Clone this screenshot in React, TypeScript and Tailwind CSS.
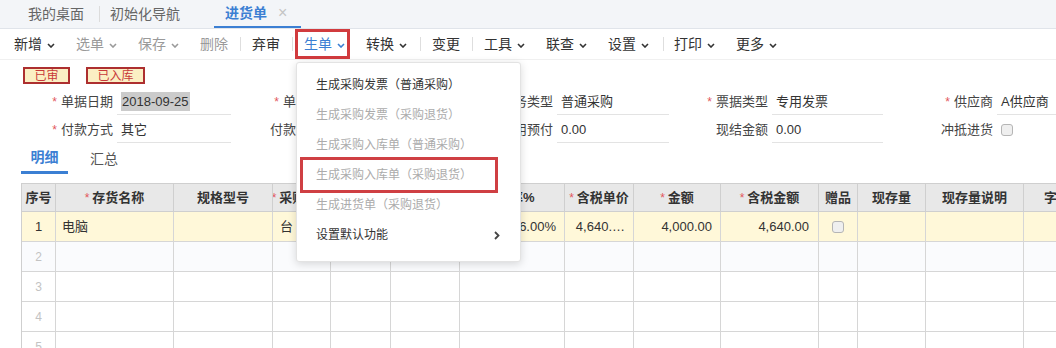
import React from 'react';

const font = '[font-family:"Liberation_Sans","Noto_Sans_CJK_SC",sans-serif]';

const Caret = () => (
  <svg width="8" height="5" viewBox="0 0 8 5" className="mt-[2px]">
    <polyline points="1,1 4,4 7,1" fill="none" stroke="currentColor" strokeWidth="1.6" />
  </svg>
);

const Sep = ({ w }: { w: string }) => (
  <div className={`${w} flex items-center`}>
    <div className="w-px h-[14px] bg-[#dedede]" />
  </div>
);

const Item = ({ label, caret, muted, w }: { label: string; caret?: boolean; muted?: boolean; w: string }) => (
  <div className={`${w} flex items-center gap-[5px] ${muted ? 'text-[#9a9a9a]' : 'text-[#333]'}`}>
    <span>{label}</span>
    {caret && <Caret />}
  </div>
);

const Star = () => <span className="text-[#e2565c] text-[12px] mr-[4px]">*</span>;

const Field = ({
  label,
  value,
  req,
  lw,
  vw,
  line = true,
  children,
}: {
  label: string;
  value?: React.ReactNode;
  req?: boolean;
  lw: string;
  vw: string;
  line?: boolean;
  children?: React.ReactNode;
}) => (
  <div className="flex items-center">
    <div className={`${lw} text-right whitespace-nowrap text-[#444]`}>
      {req && <Star />}
      {label}
    </div>
    <div className={`${vw} ml-[4px] h-[26px] flex items-center pl-[4px] whitespace-nowrap overflow-hidden ${line ? 'border-b border-[#e3e3e3]' : ''}`}>
      {value}
      {children}
    </div>
  </div>
);

const Checkbox = () => <div className="w-[12px] h-[12px] rounded-[3px] border border-[#b5b5b5] bg-[#efefef]" />;

const cols = [
  { w: 'w-[34px]', h: '序号' },
  { w: 'w-[118px]', h: '存货名称', req: true },
  { w: 'w-[99px]', h: '规格型号' },
  { w: 'w-[58px]', h: '采购单位', req: true },
  { w: 'w-[60px]', h: '数量', req: true },
  { w: 'w-[69px]', h: '单价' },
  { w: 'w-[105px]', h: '税率%', req: true },
  { w: 'w-[69px]', h: '含税单价', req: true },
  { w: 'w-[87px]', h: '金额', req: true },
  { w: 'w-[98px]', h: '含税金额', req: true },
  { w: 'w-[39px]', h: '赠品' },
  { w: 'w-[68px]', h: '现存量' },
  { w: 'w-[98px]', h: '现存量说明' },
  { w: 'w-[80px]', h: '字段一' },
];

const row1: { t: React.ReactNode; a: string }[] = [
  { t: '1', a: 'justify-center' },
  { t: '电脑', a: 'justify-start pl-[6px]' },
  { t: '', a: '' },
  { t: '台', a: 'justify-start pl-[7px]' },
  { t: '1.00', a: 'justify-end pr-[8px]' },
  { t: '4,000.00', a: 'justify-end pr-[8px]' },
  { t: '16.00%', a: 'justify-end pr-[8px]' },
  { t: '4,640.…', a: 'justify-end pr-[8px]' },
  { t: '4,000.00', a: 'justify-end pr-[8px]' },
  { t: '4,640.00', a: 'justify-end pr-[9px]' },
  { t: <Checkbox />, a: 'justify-center' },
  { t: '', a: '' },
  { t: '', a: '' },
  { t: '', a: '' },
];

const menu = [
  { t: '生成采购发票（普通采购）', on: true },
  { t: '生成采购发票（采购退货）' },
  { t: '生成采购入库单（普通采购）' },
  { t: '生成采购入库单（采购退货）' },
  { t: '生成进货单（采购退货）' },
];

export default function App() {
  return (
    <div className={`relative w-[1056px] h-[348px] overflow-hidden bg-white ${font}`}>
      {/* tab strip */}
      <div className="h-[29px] bg-[#f3f5f8] border-b border-[#e0e4ea] flex items-stretch text-[14px]">
        <div className="flex items-center pl-[28px] text-[#666]">
          <span>我的桌面</span>
          <span className="ml-[15px] mr-[10px] w-px h-[16px] bg-[#dcdcdc]" />
          <span>初始化导航</span>
        </div>
        <div className="ml-[34px] w-[87px] flex items-center pl-[11px] border-b-2 border-[#3b7fd3] text-[#3b7fd3] font-bold">
          <span>进货单</span>
          <span className="ml-[11px] text-[#c4c4c4] font-normal text-[16px]">×</span>
        </div>
      </div>

      {/* toolbar */}
      <div className="h-[31px] flex items-center pl-[14px] text-[14px] border-b border-[#f0f0f0]">
        <Item w="w-[62px]" label="新增" caret />
        <Item w="w-[62px]" label="选单" caret muted />
        <Item w="w-[62px]" label="保存" caret muted />
        <Item w="w-[40px]" label="删除" muted />
        <Sep w="w-[12px]" />
        <Item w="w-[40px]" label="弃审" />
        <Sep w="w-[3px]" />
        <div className="w-[55px] h-[30px] border-[3px] border-[#d13b3e] flex items-center gap-[5px] pl-[6px] text-[#3b7fd3]">
          <span>生单</span>
          <Caret />
        </div>
        <div className="w-[16px]" />
        <Item w="w-[54px]" label="转换" caret />
        <Sep w="w-[12px]" />
        <Item w="w-[40px]" label="变更" />
        <Sep w="w-[12px]" />
        <Item w="w-[62px]" label="工具" caret />
        <Item w="w-[62px]" label="联查" caret />
        <Item w="w-[55px]" label="设置" caret />
        <Sep w="w-[11px]" />
        <Item w="w-[62px]" label="打印" caret />
        <Item w="w-[62px]" label="更多" caret />
      </div>

      {/* status badges */}
      <div className="mt-[7px] flex gap-[16px] pl-[23px] text-[12px]">
        <div className="w-[47px] h-[17px] border-2 border-[#ad2f2f] bg-[#fbefc3] text-[#c8393a] flex items-center justify-center">已审</div>
        <div className="w-[59px] h-[17px] border-2 border-[#ad2f2f] bg-[#fbefc3] text-[#c8393a] flex items-center justify-center">已入库</div>
      </div>

      {/* header form */}
      <div className="mt-[4px] text-[13px] text-[#333]">
        <div className="h-[28px] flex items-center">
          <Field lw="w-[113px]" vw="w-[114px]" req label="单据日期" value={<span className="bg-[#cbcbcb] px-[1px]">2018-09-25</span>} />
          <Field lw="w-[104px]" vw="w-[113px]" req label="单据编号" value="JHD-2018-0925" />
          <Field lw="w-[101px]" vw="w-[112px]" req label="业务类型" value="普通采购" />
          <Field lw="w-[99px]" vw="w-[111px]" req label="票据类型" value="专用发票" />
          <Field lw="w-[110px]" vw="w-[80px]" req label="供应商" value="A供应商" />
        </div>
        <div className="h-[28px] flex items-center">
          <Field lw="w-[113px]" vw="w-[114px]" req label="付款方式" value="其它" />
          <Field lw="w-[104px]" vw="w-[113px]" label="付款截止日" value="" />
          <Field lw="w-[101px]" vw="w-[112px]" label="使用预付" value="0.00" />
          <Field lw="w-[99px]" vw="w-[111px]" label="现结金额" value="0.00" />
          <Field lw="w-[110px]" vw="w-[60px]" line={false} label="冲抵进货">
            <Checkbox />
          </Field>
        </div>
      </div>

      {/* detail tabs */}
      <div className="h-[30px] flex items-stretch text-[14px]">
        <div className="ml-[21px] w-[47px] border-b-[3px] border-[#3b7fd3] flex items-center justify-center text-[#3b7fd3] font-bold">明细</div>
        <div className="pl-[22px] flex items-center text-[#555]">汇总</div>
      </div>

      {/* grid */}
      <div className="mt-[9px] ml-[21px] w-[1120px] text-[13px] text-[#333]">
        <div className="flex h-[29px] bg-[#e8e8e8] border-t border-l border-[#cfcfcf]">
          {cols.map((c, i) => (
            <div key={i} className={`${c.w} shrink-0 flex items-center justify-center whitespace-nowrap overflow-hidden border-r border-b border-[#cfcfcf] font-bold`}>
              {c.req && <span className="text-[#e2565c] font-normal text-[12px] mr-[3px]">*</span>}
              {c.h}
            </div>
          ))}
        </div>
        <div className="flex h-[30px] bg-[#fff8d9] border-l border-[#cfcfcf]">
          {row1.map((c, i) => (
            <div key={i} className={`${cols[i].w} shrink-0 flex items-center whitespace-nowrap overflow-hidden border-r border-b border-[#d6d6d6] ${c.a}`}>
              {c.t}
            </div>
          ))}
        </div>
        {[2, 3, 4, 5].map((n) => (
          <div key={n} className={`flex h-[30px] border-l border-[#cfcfcf] ${n === 2 ? 'bg-[#fafbfd]' : 'bg-white'}`}>
            {cols.map((c, i) => (
              <div key={i} className={`${c.w} shrink-0 flex items-center justify-center border-r border-b border-[#d6d6d6] text-[#c3c3c3] text-[12px]`}>
                {i === 0 ? n : ''}
              </div>
            ))}
          </div>
        ))}
      </div>

      {/* 生单 dropdown */}
      <div className="absolute left-[296px] top-[62px] w-[225px] h-[200px] bg-white border border-[#e3e3e3] rounded-[3px] shadow-[0_2px_8px_rgba(0,0,0,0.15)] pt-[7px] text-[12px]">
        {menu.map((m, i) => (
          <div key={i} className={`h-[30px] flex items-center pl-[19px] ${m.on ? 'text-[#333]' : 'text-[#ababab]'}`}>
            {m.t}
          </div>
        ))}
        <div className="h-[30px] flex items-center justify-between pl-[19px] pr-[20px] text-[#333]">
          <span>设置默认功能</span>
          <svg width="6" height="9" viewBox="0 0 6 9">
            <polyline points="1,1 4.5,4.5 1,8" fill="none" stroke="#444" strokeWidth="1.8" />
          </svg>
        </div>
        <div className="absolute left-[3px] top-[94px] w-[198px] h-[36px] border-[3px] border-[#cf3f43]" />
      </div>
    </div>
  );
}
